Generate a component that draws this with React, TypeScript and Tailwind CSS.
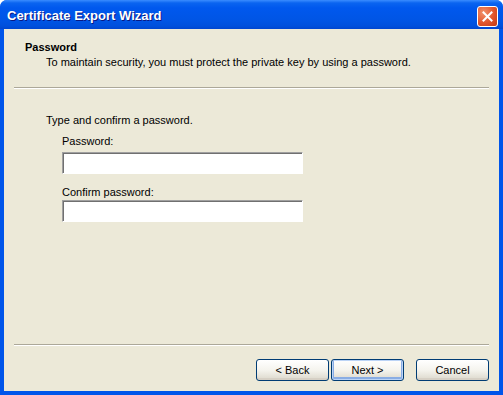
import React from "react";

function Sep() {
  return (
    <div className="mx-[10px] h-[2px] border-t border-[#ACA899] border-b border-b-white" />
  );
}

function Input() {
  return (
    <div className="ml-[58px] w-[241px] h-[22px] bg-white border border-t-[#A0A0A0] border-l-[#A0A0A0] border-r-white border-b-white shadow-[inset_1px_1px_0_#707070]" />
  );
}

function Btn({ label, def }: { label: string; def?: boolean }) {
  return (
    <div
      className={
        "w-[73px] h-[22px] rounded-[3px] border border-[#003C74] flex items-center justify-center text-[11px] text-black bg-gradient-to-b from-white via-[#F5F4EE] to-[#DCD8CC] " +
        (def ? "shadow-[inset_0_0_0_1px_#BCD4F6,inset_0_-1px_0_2px_#89ADE4]" : "shadow-[inset_0_-2px_0_#D6D0C5]")
      }
    >
      {label}
    </div>
  );
}

export default function App() {
  return (
    <div
      className="w-[503px] h-[395px] bg-[#0055EA] rounded-t-[7px] overflow-hidden flex flex-col"
      style={{ fontFamily: '"Liberation Sans", Arial, sans-serif' }}
    >
      <div className="h-[29px] shrink-0 flex items-center justify-between pl-[7px] pr-[5px] bg-[linear-gradient(to_bottom,#3A8CFF_0px,#0A64F0_3px,#0058EE_8px,#0055E5_20px,#0050DC_26px,#0046D0_29px)]">
        <span className="text-white font-bold text-[13px] pt-[2px] [text-shadow:1px_1px_0_#0A1883]">
          Certificate Export Wizard
        </span>
        <div className="w-[21px] h-[21px] mt-[3px] rounded-[3px] border border-white bg-[radial-gradient(circle_at_30%_30%,#F2926C,#E0552C_55%,#C23A14)] flex items-center justify-center">
          <svg width="11" height="11" viewBox="0 0 11 11">
            <path d="M1.5 1.5 L9.5 9.5 M9.5 1.5 L1.5 9.5" stroke="white" strokeWidth="2" strokeLinecap="square" />
          </svg>
        </div>
      </div>
      <div className="flex-1 mx-[4px] mb-[4px] bg-[#ECE9D8] flex flex-col text-[11px] text-black leading-[13px]">
        <div className="h-[58px] pt-[12px] shrink-0">
          <div className="ml-[21px] font-bold">Password</div>
          <div className="ml-[42px] mt-[2px]">
            To maintain security, you must protect the private key by using a password.
          </div>
        </div>
        <Sep />
        <div className="pt-[25px] flex-1">
          <div className="ml-[42px]">Type and confirm a password.</div>
          <div className="ml-[58px] mt-[8px]">Password:</div>
          <div className="mt-[4px]"><Input /></div>
          <div className="ml-[58px] mt-[12px]">Confirm password:</div>
          <div className="mt-[1px]"><Input /></div>
        </div>
        <Sep />
        <div className="h-[45px] flex items-start pt-[13px] pl-[252px]">
          <Btn label="< Back" />
          <div className="w-[2px]" />
          <Btn label="Next >" def />
          <div className="w-[12px]" />
          <Btn label="Cancel" />
        </div>
      </div>
    </div>
  );
}
